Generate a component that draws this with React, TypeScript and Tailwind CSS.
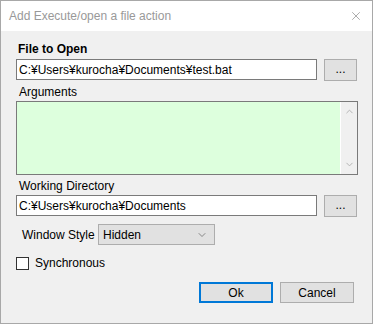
import { ChevronDown, ChevronUp, X } from 'lucide-react';

const FONT = "font-['Liberation_Sans',_Arial,_sans-serif]";

function PathRow({ value, className = '' }: { value: string; className?: string }) {
  return (
    <div className={`flex items-start ${className}`}>
      <div className="flex h-[21px] w-[301px] items-center border border-[#7a7a7a] bg-white pl-[2px] text-[12px] text-black">
        {value}
      </div>
      <button
        type="button"
        className="ml-[7px] flex h-[22px] w-[33px] items-center justify-center border border-[#adadad] bg-[#e1e1e1] pb-[2px] text-[12px] leading-none text-black"
      >
        ...
      </button>
    </div>
  );
}

export default function App() {
  return (
    <div
      className={`flex h-[324px] w-[373px] flex-col border border-[#a8a8a8] bg-[#f0f0f0] text-[12px] leading-[16px] text-black ${FONT}`}
    >
      <div className="flex h-[30px] shrink-0 items-center justify-between bg-white pl-[8px] pr-[9px]">
        <span className="whitespace-nowrap text-[12px] text-[#999999]">Add Execute/open a file action</span>
        <X className="h-[14px] w-[14px] text-[#8a8a8a]" strokeWidth={1.2} />
      </div>

      <div className="flex flex-col pl-[15px]">
        <div className="mt-[10px] h-[16px] pl-[2px] font-bold">File to Open</div>
        <PathRow value="C:¥Users¥kurocha¥Documents¥test.bat" className="mt-[2px]" />

        <div className="mt-[3px] h-[16px] pl-[3px]">Arguments</div>
        <div className="mt-[1px] flex h-[74px] w-[342px] border border-[#7a7a7a] bg-[#ddffdd]">
          <div className="flex-1" />
          <div className="flex w-[17px] flex-col items-center justify-between border-l border-white bg-[#f0f0f0] py-[4px]">
            <ChevronUp className="h-[11px] w-[11px] text-[#b0b0b0]" strokeWidth={2} />
            <ChevronDown className="h-[11px] w-[11px] text-[#b0b0b0]" strokeWidth={2} />
          </div>
        </div>

        <div className="mt-[3px] h-[16px] whitespace-nowrap pl-[3px]">Working Directory</div>
        <PathRow value="C:¥Users¥kurocha¥Documents" className="mt-[1px]" />

        <div className="mt-[7px] flex items-center">
          <span className="ml-[6px] w-[75px] whitespace-nowrap">Window Style</span>
          <div className="ml-[1px] flex h-[21px] w-[117px] items-center justify-between border border-[#adadad] bg-[#e1e1e1] pl-[4px] pr-[6px]">
            <span>Hidden</span>
            <ChevronDown className="h-[12px] w-[12px] text-[#555555]" strokeWidth={1.3} />
          </div>
        </div>

        <label className="mt-[10px] flex items-center">
          <span className="h-[13px] w-[13px] border border-[#333333] bg-white" />
          <span className="ml-[6px]">Synchronous</span>
        </label>
      </div>

      <div className="mt-[11px] flex justify-end gap-[7px] pr-[18px]">
        <button
          type="button"
          className="flex h-[21px] w-[74px] items-center justify-center border-2 border-[#0078d7] bg-[#e1e1e1] text-[12px]"
        >
          Ok
        </button>
        <button
          type="button"
          className="flex h-[21px] w-[74px] items-center justify-center border border-[#adadad] bg-[#e1e1e1] text-[12px]"
        >
          Cancel
        </button>
      </div>
    </div>
  );
}
